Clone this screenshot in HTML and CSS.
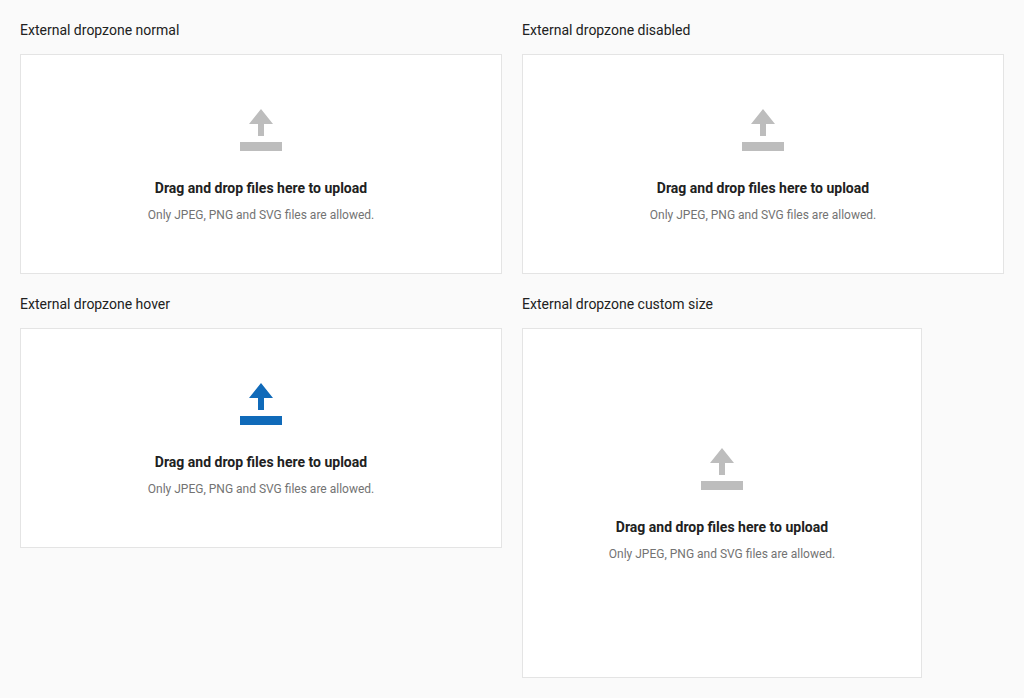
FILE: index.html
```html
<!DOCTYPE html>
<html lang="en">
<head>
<meta charset="utf-8">
<title>External dropzone</title>
<link rel="stylesheet" href="styles.css">
</head>
<body>
<main class="grid">
  <section class="example">
    <h2 class="title">External dropzone normal</h2>
    <div class="dropzone">
      <svg class="icon" viewBox="0 0 42 42" aria-hidden="true"><path d="M21 0 33 15H24V27H18V15H9ZM0 33H42V42H0Z"/></svg>
      <strong class="label">Drag and drop files here to upload</strong>
      <span class="note">Only JPEG, PNG and SVG files are allowed.</span>
    </div>
  </section>
  <section class="example">
    <h2 class="title">External dropzone disabled</h2>
    <div class="dropzone" aria-disabled="true">
      <svg class="icon" viewBox="0 0 42 42" aria-hidden="true"><path d="M21 0 33 15H24V27H18V15H9ZM0 33H42V42H0Z"/></svg>
      <strong class="label">Drag and drop files here to upload</strong>
      <span class="note">Only JPEG, PNG and SVG files are allowed.</span>
    </div>
  </section>
  <section class="example">
    <h2 class="title">External dropzone hover</h2>
    <div class="dropzone dropzone-hover">
      <svg class="icon" viewBox="0 0 42 42" aria-hidden="true"><path d="M21 0 33 15H24V27H18V15H9ZM0 33H42V42H0Z"/></svg>
      <strong class="label">Drag and drop files here to upload</strong>
      <span class="note">Only JPEG, PNG and SVG files are allowed.</span>
    </div>
  </section>
  <section class="example">
    <h2 class="title">External dropzone custom size</h2>
    <div class="dropzone dropzone-custom">
      <svg class="icon" viewBox="0 0 42 42" aria-hidden="true"><path d="M21 0 33 15H24V27H18V15H9ZM0 33H42V42H0Z"/></svg>
      <strong class="label">Drag and drop files here to upload</strong>
      <span class="note">Only JPEG, PNG and SVG files are allowed.</span>
    </div>
  </section>
</main>
</body>
</html>
```
FILE: styles.css
```css
* {
  box-sizing: border-box;
}

body {
  margin: 0;
  background: #fafafa;
  color: #212121;
  font-family: Roboto, "Liberation Sans", sans-serif;
  font-size: 14px;
  line-height: 20px;
}

.grid {
  display: grid;
  grid-template-columns: 1fr 1fr;
  gap: 20px;
  align-items: start;
  padding: 20px;
}

.title {
  margin: 0 0 14px;
  font-size: 14px;
  font-weight: 400;
}

.dropzone {
  display: flex;
  flex-direction: column;
  align-items: center;
  justify-content: center;
  min-height: 220px;
  padding: 24px 20px 20px;
  border: 1px solid #e4e4e4;
  background: #fff;
  text-align: center;
}

.dropzone-custom {
  max-width: 400px;
  min-height: 350px;
}

.icon {
  width: 42px;
  height: 42px;
  margin-bottom: 27px;
  fill: #bdbdbd;
}

.dropzone-hover .icon {
  fill: #106ab9;
}

.label {
  margin-bottom: 9px;
  font-weight: 700;
}

.note {
  color: #737373;
  font-size: 12px;
  line-height: 16px;
}
```
